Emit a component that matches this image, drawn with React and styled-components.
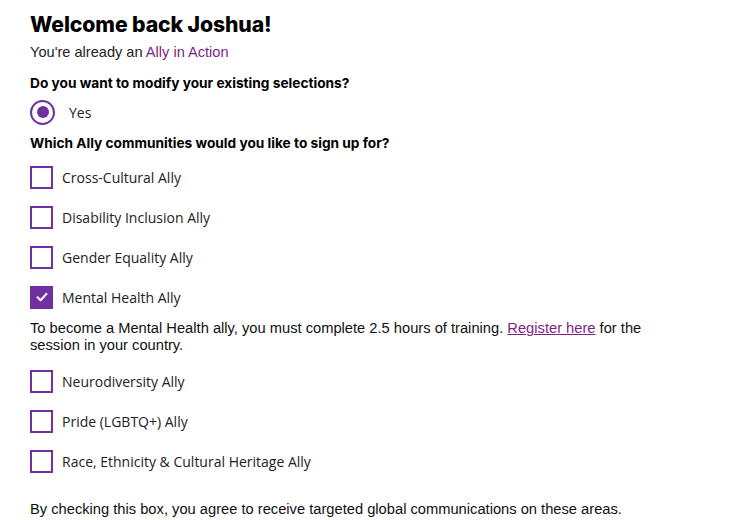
import React, { useState } from 'react';
import styled, { createGlobalStyle } from 'styled-components';

const GlobalStyle = createGlobalStyle`
  body {
    margin: 0;
    background: #fff;
    font-family: 'Liberation Sans', Arial, sans-serif;
    color: #111;
  }
`;

const purple = '#7030a0';
const linkPurple = '#7d1f86';

const Page = styled.div`
  padding: 0 30px;
  display: flex;
  flex-direction: column;
`;

const Title = styled.h1`
  margin: 10px 0 0;
  font-family: 'Inter', sans-serif;
  font-weight: 800;
  font-size: 21.2px;
  line-height: 28px;
  letter-spacing: -0.1px;
  color: #000;
`;

const Sub = styled.p`
  margin: 4px 0 0;
  font-size: 14.6px;
  line-height: 20px;
  color: #222;
`;

const Accent = styled.span`
  color: ${linkPurple};
`;

const Question = styled.h2`
  margin: ${p => p.$top}px 0 0;
  font-family: 'Inter', sans-serif;
  font-weight: 700;
  font-size: 13.7px;
  line-height: 20px;
  color: #000;
`;

const RadioRow = styled.label`
  margin-top: 5px;
  height: 28px;
  display: flex;
  align-items: center;
  gap: 14px;
  font-family: 'Open Sans', sans-serif;
  font-size: 14px;
  color: #222;
`;

const RadioCircle = styled.span`
  width: 21px;
  height: 21px;
  border: 2px solid ${purple};
  border-radius: 50%;
  display: flex;
  align-items: center;
  justify-content: center;
  &::after {
    content: '';
    width: 12px;
    height: 12px;
    border-radius: 50%;
    background: ${purple};
  }
`;

const List = styled.div`
  margin-top: ${p => p.$top}px;
  display: flex;
  flex-direction: column;
`;

const CheckRow = styled.label`
  height: 40px;
  display: flex;
  align-items: center;
  gap: 9px;
  font-family: 'Open Sans', sans-serif;
  font-size: 14px;
  color: #222;
  cursor: pointer;
`;

const Box = styled.span`
  width: 19px;
  height: 19px;
  border: 2px solid ${purple};
  background: ${p => (p.$checked ? purple : '#fff')};
  display: flex;
  align-items: center;
  justify-content: center;
  flex-shrink: 0;
`;

const Note = styled.p`
  margin: 3px 0 0;
  max-width: 625px;
  font-size: 14.7px;
  line-height: 17px;
  color: #111;
`;

const RegLink = styled.a`
  color: ${linkPurple};
  text-decoration: underline;
`;

const Footer = styled.p`
  margin: 18px 0 0;
  font-size: 14.7px;
  line-height: 20px;
  color: #111;
`;

const first = ['Cross-Cultural Ally', 'Disability Inclusion Ally', 'Gender Equality Ally', 'Mental Health Ally'];
const second = ['Neurodiversity Ally', 'Pride (LGBTQ+) Ally', 'Race, Ethnicity & Cultural Heritage Ally'];

function Check({ label, checked, onToggle }) {
  return (
    <CheckRow onClick={onToggle}>
      <Box $checked={checked}>
        {checked && (
          <svg width="12" height="10" viewBox="0 0 12 10">
            <path d="M1.5 5.2 L4.6 8.2 L10.5 1.8" fill="none" stroke="#fff" strokeWidth="2" strokeLinecap="round" strokeLinejoin="round" />
          </svg>
        )}
      </Box>
      {label}
    </CheckRow>
  );
}

export default function App() {
  const [picked, setPicked] = useState({ 'Mental Health Ally': true });
  const toggle = name => setPicked({ ...picked, [name]: !picked[name] });

  return (
    <Page>
      <GlobalStyle />
      <Title>Welcome back Joshua!</Title>
      <Sub>You're already an <Accent>Ally in Action</Accent></Sub>
      <Question $top={11}>Do you want to modify your existing selections?</Question>
      <RadioRow>
        <RadioCircle />
        Yes
      </RadioRow>
      <Question $top={7}>Which Ally communities would you like to sign up for?</Question>
      <List $top={4}>
        {first.map(name => (
          <Check key={name} label={name} checked={!!picked[name]} onToggle={() => toggle(name)} />
        ))}
      </List>
      <Note>
        To become a Mental Health ally, you must complete 2.5 hours of training. <RegLink href="#">Register here</RegLink> for the session in your country.
      </Note>
      <List $top={7}>
        {second.map(name => (
          <Check key={name} label={name} checked={!!picked[name]} onToggle={() => toggle(name)} />
        ))}
      </List>
      <Footer>By checking this box, you agree to receive targeted global communications on these areas.</Footer>
    </Page>
  );
}
